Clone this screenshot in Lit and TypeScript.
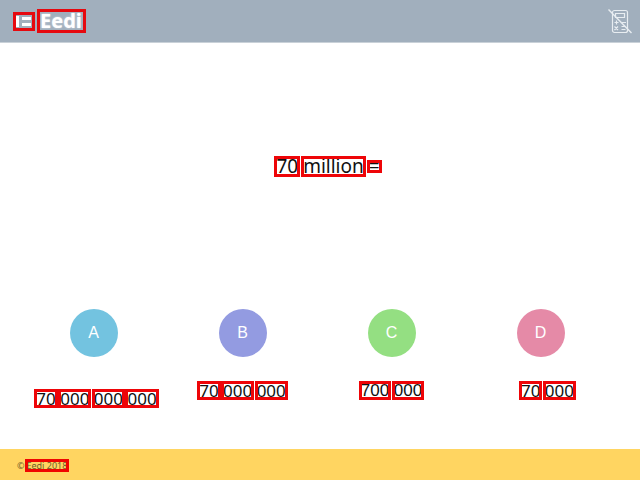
import { LitElement, html, css } from "lit";
import { customElement, property } from "lit/decorators.js";

interface Answer {
  letter: string;
  text: string;
  variant?: string;
}

const ANSWERS: Answer[] = [
  { letter: "A", text: "70 000 000 000", variant: "tall" },
  { letter: "B", text: "70 000 000" },
  { letter: "C", text: "700 000", variant: "plain" },
  { letter: "D", text: "70 000", variant: "indented" },
];

/* A line of text in which every word is framed. */
@customElement("marked-text")
class MarkedText extends LitElement {
  @property() text = "";

  static styles = css`
    :host {
      display: block;
      white-space: nowrap;
    }
    .word {
      display: inline-block;
      outline: 3px solid #ee0508;
      outline-offset: -1px;
    }
    .symbol {
      line-height: 9px;
    }
  `;

  render() {
    return this.text
      .split(" ")
      .map((w) => html`<span class="word ${w === "=" ? "symbol" : ""}">${w}</span> `);
  }
}

@customElement("app-root")
class AppRoot extends LitElement {
  static styles = css`
    :host {
      display: flex;
      flex-direction: column;
      min-height: 100vh;
      background: #fff;
      color: #111;
      font-family: "Noto Sans", "Open Sans", sans-serif;
    }
    header {
      display: flex;
      align-items: center;
      justify-content: space-between;
      box-sizing: border-box;
      height: 43px;
      padding: 0 8px 0 15px;
      background: #a1afbd;
      border-bottom: 1px solid #c9d1d8;
    }
    .brand {
      display: flex;
      align-items: center;
      gap: 6px;
      color: #fff;
      text-decoration: none;
    }
    .mark,
    .name {
      outline: 3px solid #e6090f;
      outline-offset: -1px;
    }
    .mark {
      width: 18px;
      height: 15px;
    }
    .name {
      padding: 0 2px 0 1px;
      font-size: 20px;
      font-weight: 700;
      line-height: 20px;
      text-shadow: 0 0 2px #dfe5ea;
    }
    main {
      flex: 1;
      display: flex;
      flex-direction: column;
    }
    h1 {
      flex: 1;
      display: flex;
      align-items: center;
      justify-content: center;
      margin: 0;
      padding: 0 0 20px 16px;
      font-size: 19px;
      font-weight: 400;
      line-height: 17px;
    }
    .answers {
      display: grid;
      grid-template-columns: repeat(4, 1fr);
      height: 140px;
      padding: 0 25px 0 19px;
    }
    .answer {
      display: flex;
      flex-direction: column;
      align-items: center;
      gap: 26px;
    }
    button {
      width: 48px;
      height: 48px;
      padding: 0;
      border: 0;
      border-radius: 50%;
      color: #fff;
      font-family: "Liberation Sans", Arial, sans-serif;
      font-size: 16px;
      line-height: 48px;
    }
    .a {
      background: #73c3e0;
    }
    .b {
      background: #939be1;
    }
    .c {
      background: #94df82;
    }
    .d {
      background: #e58aa7;
    }
    .value {
      font-size: 17px;
      line-height: 15px;
    }
    .tall {
      padding: 8px 0 0 6px;
    }
    .plain {
      font-family: "Liberation Sans", Arial, sans-serif;
    }
    .indented {
      padding-left: 14px;
    }
    footer {
      display: flex;
      align-items: center;
      gap: 2px;
      box-sizing: border-box;
      height: 31px;
      padding: 2px 17px 0;
      background: #ffd561;
      color: #6f5d2b;
      font-size: 9px;
      line-height: 9px;
    }
    .owner {
      outline: 3px solid #f00500;
      outline-offset: -1px;
    }
  `;

  render() {
    return html`
      <header>
        <a class="brand" href="#" aria-label="Eedi">
          <svg class="mark" viewBox="0 0 18 15" fill="#fff">
            <path d="M1 2h3v11H1zM7 3h9v3H7zM7 9h9v3H7z" />
          </svg>
          <span class="name">Eedi</span>
        </a>
        <svg width="24" height="26" viewBox="0 0 24 26" fill="none" stroke="#e8edf1" stroke-width="1.2" role="img" aria-label="No calculator">
          <rect x="4.5" y="2.500" width="15" height="22" rx="2" />
          <path d="M7.500 5.500h9v4h-9zM6.500 14.500h4M8.500 12.500v4M14 14.500h4M6.500 18.500l3.500 3.500M10 18.500l-3.500 3.500M13.500 18.500h4M13.500 21.500h4" />
          <path d="M0.500 1.500L23.500 25" stroke-width="1.4" />
        </svg>
      </header>
      <main>
        <h1><marked-text text="70 million ="></marked-text></h1>
        <div class="answers">
          ${ANSWERS.map(
            (a) => html`
              <div class="answer">
                <button class=${a.letter.toLowerCase()} aria-labelledby="b-${a.letter} v-${a.letter}" id="b-${a.letter}">${a.letter}</button>
                <marked-text class="value ${a.variant ?? ""}" id="v-${a.letter}" text=${a.text}></marked-text>
              </div>
            `
          )}
        </div>
      </main>
      <footer><span>©</span><span class="owner">Eedi 2018</span></footer>
    `;
  }
}
